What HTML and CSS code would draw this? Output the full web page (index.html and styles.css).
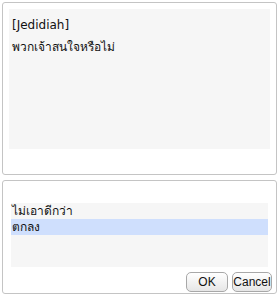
FILE: index.html
```html
<!DOCTYPE html>
<html lang="th">
<head>
    <meta charset="UTF-8">
    <title>Dialog</title>
    <link rel="stylesheet" href="styles.css">
</head>
<body>
    <div class="dialog">
        <div class="panel message-panel">
            <div class="message-box">
                <p class="speaker">[Jedidiah]</p>
                <p class="line">พวกเจ้าสนใจหรือไม่</p>
            </div>
        </div>

        <div class="panel choice-panel">
            <ul class="choices">
                <li>ไม่เอาดีกว่า</li>
                <li class="selected">ตกลง</li>
            </ul>
            <div class="buttons">
                <button class="btn btn-ok">OK</button>
                <button class="btn btn-cancel">Cancel</button>
            </div>
        </div>
    </div>
</body>
</html>
```

FILE: styles.css
```css
body {
    margin: 0;
    background: #fff;
    font-family: Tahoma, "DejaVu Sans", "Noto Sans", sans-serif;
    font-size: 12px;
    color: #111;
}

.dialog {
    width: 278px;
    height: 296px;
    padding: 2px 1px 0 2px;
    box-sizing: border-box;
    display: flex;
    flex-direction: column;
    gap: 5px;
}

.panel {
    border: 1px solid #c4c4c4;
    border-radius: 3px;
    box-sizing: border-box;
}

.message-panel {
    height: 173px;
    padding: 6px 6px 0 6px;
}

.message-box {
    background: #f6f6f6;
    height: 140px;
    padding: 6px 3px 4px 3px;
    box-sizing: border-box;
}

.speaker,
.line {
    margin: 0;
    line-height: 20px;
}

.speaker {
    margin-bottom: 2px;
}

.choice-panel {
    height: 114px;
    padding: 22px 8px 0 8px;
    display: flex;
    flex-direction: column;
}

.choices {
    list-style: none;
    margin: 0;
    padding: 0;
    height: 64px;
    background: #f6f6f6;
}

.choices li {
    height: 16px;
    line-height: 16px;
    padding-left: 1px;
}

.choices .selected {
    background: #cfdffd;
}

.buttons {
    display: flex;
    justify-content: flex-end;
    gap: 4px;
    margin-top: 5px;
    margin-right: -4px;
}

.btn {
    height: 20px;
    padding: 0;
    font-family: "Liberation Sans", Arial, sans-serif;
    font-size: 12px;
    color: #111;
    border: 1px solid #a8a8a8;
    border-radius: 5px;
    background: linear-gradient(#ffffff, #e6e6e6);
}

.btn-ok {
    width: 42px;
}

.btn-cancel {
    width: 40px;
}
```
